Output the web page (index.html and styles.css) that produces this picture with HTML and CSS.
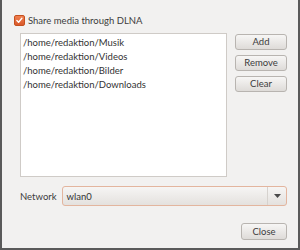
FILE: index.html
```html
<!DOCTYPE html>
<html>
<head>
<meta charset="utf-8">
<link rel="stylesheet" href="styles.css">
</head>
<body>
<div class="win">
  <label class="check-row">
    <span class="checkbox">
      <svg width="11" height="11" viewBox="0 0 11 11"><path d="M2.3 5.4 L4.4 7.7 L8.4 2.8" fill="none" stroke="#fff" stroke-width="1.7" stroke-linecap="round" stroke-linejoin="round"/></svg>
    </span>
    <span>Share media through DLNA</span>
  </label>
  <div class="main">
    <div class="list">
      <div class="item">/home/redaktion/Musik</div>
      <div class="item">/home/redaktion/Videos</div>
      <div class="item">/home/redaktion/Bilder</div>
      <div class="item">/home/redaktion/Downloads</div>
    </div>
    <div class="buttons">
      <button class="btn">Add</button>
      <button class="btn">Remove</button>
      <button class="btn">Clear</button>
    </div>
  </div>
  <div class="net-row">
    <span class="net-label">Network</span>
    <div class="combo">
      <span class="combo-text">wlan0</span>
      <span class="combo-arrow">
        <svg width="7" height="4" viewBox="0 0 7 4"><path d="M0 0 H7 L3.5 4 Z" fill="#4a4a4a"/></svg>
      </span>
    </div>
  </div>
  <div class="footer">
    <button class="btn close">Close</button>
  </div>
</div>
</body>
</html>
```
FILE: styles.css
```css
html, body {
  margin: 0;
  padding: 0;
}
body {
  width: 300px;
  height: 250px;
  background: #f2f1f0;
  font-family: "Lato", "DejaVu Sans", sans-serif;
  font-size: 9.5px;
  color: #3c3c3c;
}
.win {
  box-sizing: border-box;
  width: 300px;
  height: 250px;
  border-left: 2px solid #5a5a5a;
  border-right: 2px solid #5a5a5a;
  border-bottom: 2px solid #5a5a5a;
  padding: 13px 11px 0 12px;
  display: flex;
  flex-direction: column;
}
.check-row {
  display: flex;
  align-items: center;
  gap: 3px;
  height: 14px;
}
.checkbox {
  width: 11px;
  height: 11px;
  border-radius: 2px;
  background: linear-gradient(#f08050, #d9582a);
  border: 1px solid #c4501f;
  box-sizing: border-box;
  display: flex;
  align-items: center;
  justify-content: center;
}
.checkbox svg { display: block; }
.main {
  display: flex;
  margin-top: 6px;
  margin-left: 6px;
  gap: 8px;
}
.list {
  box-sizing: border-box;
  width: 207px;
  height: 144px;
  background: #fff;
  border: 1px solid #cfcbc7;
  padding: 2px 0 0 2px;
  color: #333;
}
.item {
  height: 14px;
  line-height: 14px;
}
.buttons {
  display: flex;
  flex-direction: column;
  gap: 5px;
  padding-top: 1px;
}
.btn {
  box-sizing: border-box;
  width: 52px;
  height: 16px;
  padding: 0;
  font-family: inherit;
  font-size: 9.5px;
  color: #3c3c3c;
  background: linear-gradient(#f7f6f5, #dedbd8);
  border: 1px solid #b8b4b0;
  border-radius: 3px;
  line-height: 14px;
}
.net-row {
  display: flex;
  align-items: center;
  margin-top: 9px;
  margin-left: 6px;
  gap: 5px;
}
.combo {
  box-sizing: border-box;
  width: 226px;
  height: 20px;
  display: flex;
  align-items: center;
  border: 1px solid #e3b59e;
  border-radius: 3px;
  background: linear-gradient(#f6f5f4, #e4e1de);
}
.combo-text {
  flex: 1;
  padding-left: 4px;
  color: #333;
}
.combo-arrow {
  width: 18px;
  height: 18px;
  border-left: 1px solid #d6d2ce;
  display: flex;
  align-items: center;
  justify-content: center;
}
.combo-arrow svg { display: block; }
.footer {
  display: flex;
  justify-content: flex-end;
  margin-top: 17px;
}
.close {
  width: 46px;
  height: 17px;
}
```
